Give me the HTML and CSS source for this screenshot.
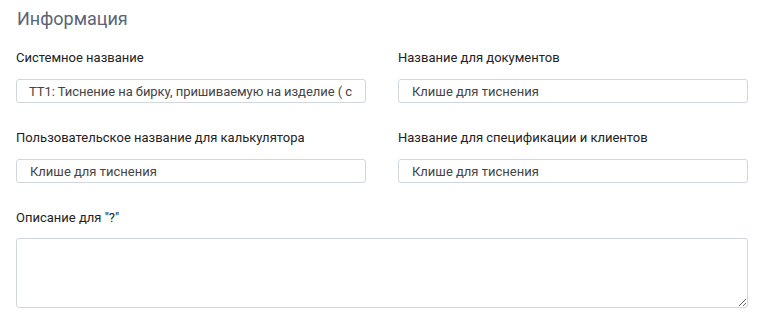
FILE: index.html
```html
<!DOCTYPE html>
<html lang="ru">
  <head>
    <meta charset="UTF-8" />
    <meta name="viewport" content="width=device-width, initial-scale=1.0" />
    <title>Информация</title>
    <link rel="stylesheet" href="styles.css">
  </head>
  <body>
    <div class="panel">
      <h2 class="panel-title">Информация</h2>
      <div class="fields">
        <div class="field">
          <label class="field-label" for="sys-name">Системное название</label>
          <input class="field-input" id="sys-name" value="ТТ1: Тиснение на бирку, пришиваемую на изделие ( с" />
        </div>
        <div class="field">
          <label class="field-label" for="doc-name">Название для документов</label>
          <input class="field-input" id="doc-name" value="Клише для тиснения" />
        </div>
        <div class="field">
          <label class="field-label" for="calc-name">Пользовательское название для калькулятора</label>
          <input class="field-input" id="calc-name" value="Клише для тиснения" />
        </div>
        <div class="field">
          <label class="field-label" for="spec-name">Название для спецификации и клиентов</label>
          <input class="field-input" id="spec-name" value="Клише для тиснения" />
        </div>
        <div class="field field-wide">
          <label class="field-label" for="hint">Описание для "?"</label>
          <textarea class="field-textarea" id="hint"></textarea>
        </div>
      </div>
    </div>
  </body>
</html>
```

FILE: styles.css
```css
body {
  margin: 0;
  background: #fff;
  font-family: Roboto, "Liberation Sans", Arial, sans-serif;
  color: #222;
}
.panel {
  padding: 7px 23px 0 16px;
}
.panel-title {
  margin: 0 0 19px 1px;
  font-size: 18px;
  line-height: 24px;
  font-weight: 400;
  color: #5b6377;
}
.fields {
  display: grid;
  grid-template-columns: 1fr 1fr;
  column-gap: 32px;
  row-gap: 27px;
}
.field {
  display: flex;
  flex-direction: column;
}
.field-wide {
  grid-column: 1 / 3;
}
.field-label {
  font-size: 13px;
  line-height: 16px;
  color: #222;
  margin-bottom: 13px;
}
.field-input,
.field-textarea {
  box-sizing: border-box;
  border: 1px solid #d2d6de;
  border-radius: 3px;
  font-family: inherit;
  font-size: 13px;
  color: #444;
  background: #fff;
  outline: none;
}
.field-input {
  height: 24px;
  padding: 0 12px 0 13px;
}
#sys-name {
  padding-left: 12px;
  letter-spacing: -0.05px;
}
.field-textarea {
  height: 70px;
  padding: 6px 13px;
  margin-top: -1px;
}
```
